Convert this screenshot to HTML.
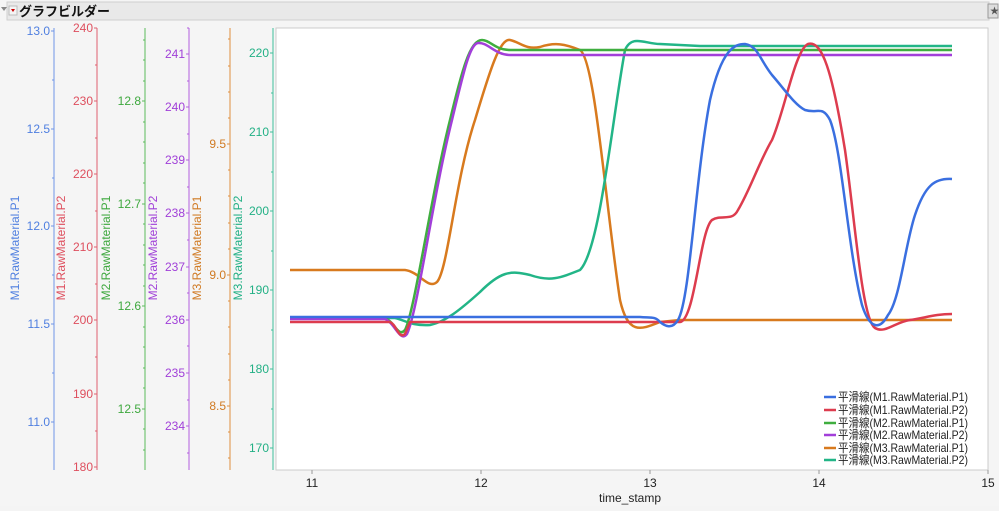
<!DOCTYPE html>
<html><head><meta charset="utf-8"><style>
body{margin:0;width:999px;height:506px;background:#f4f4f4;overflow:hidden;font-family:"Liberation Sans","Noto Sans CJK JP",sans-serif;}
</style></head><body>
<svg width="999" height="506" xmlns="http://www.w3.org/2000/svg" font-family="Liberation Sans, Noto Sans CJK JP, sans-serif">
<rect x="0" y="0" width="999" height="506" fill="#f5f5f5"/>
<rect x="7" y="2" width="982" height="18" fill="#e9e9e9" stroke="#cfcfcf"/>
<path d="M1 7 L7 7 L4 11 Z" fill="#888"/>
<rect x="9" y="6" width="8" height="9" fill="#f4f4f4" stroke="#bbb"/>
<path d="M11 9 L15 9 L13 12 Z" fill="#c00"/>
<text x="19" y="16" font-size="13" font-weight="bold" fill="#111">グラフビルダー</text>
<rect x="988" y="4" width="10" height="14" fill="#ddd" stroke="#999"/>
<text x="990" y="14" font-size="9" fill="#555">★</text>
<rect x="276" y="28" width="712" height="442" fill="#fff" stroke="#ccc"/>
<g font-size="12">
<line x1="54" y1="28" x2="54" y2="470" stroke="#6f95e8"/>
<path stroke="#6f95e8" d="M51 31h3M51 129h3M51 226h3M51 324h3M51 422h3M52 80h2M52 178h2M52 275h2M52 373h2"/>
<g fill="#4f7fe0" text-anchor="end"><text x="50" y="35">13.0</text><text x="50" y="133">12.5</text><text x="50" y="230">12.0</text><text x="50" y="328">11.5</text><text x="50" y="426">11.0</text></g>
<text transform="translate(19,248) rotate(-90)" text-anchor="middle" fill="#4f7fe0">M1.RawMaterial.P1</text>
<line x1="97" y1="28" x2="97" y2="470" stroke="#e0606e"/>
<path stroke="#e0606e" d="M94 28h3M94 101h3M94 174h3M94 247h3M94 320h3M94 394h3M94 467h3M95 65h2M95 138h2M95 211h2M95 284h2M95 357h2M95 431h2"/>
<g fill="#de4f5e" text-anchor="end"><text x="93" y="32">240</text><text x="93" y="105">230</text><text x="93" y="178">220</text><text x="93" y="251">210</text><text x="93" y="324">200</text><text x="93" y="398">190</text><text x="93" y="471">180</text></g>
<text transform="translate(65,248) rotate(-90)" text-anchor="middle" fill="#de4f5e">M1.RawMaterial.P2</text>
<line x1="145" y1="28" x2="145" y2="470" stroke="#5cba5c"/>
<path stroke="#5cba5c" d="M142 101h3M142 204h3M142 306h3M142 409h3M143 40h2M143 60h2M143 81h2M143 122h2M143 142h2M143 163h2M143 183h2M143 224h2M143 245h2M143 265h2M143 286h2M143 327h2M143 347h2M143 368h2M143 388h2M143 429h2M143 450h2"/>
<g fill="#3ea83e" text-anchor="end"><text x="141" y="105">12.8</text><text x="141" y="208">12.7</text><text x="141" y="310">12.6</text><text x="141" y="413">12.5</text></g>
<text transform="translate(110,248) rotate(-90)" text-anchor="middle" fill="#3ea83e">M2.RawMaterial.P1</text>
<line x1="189" y1="28" x2="189" y2="470" stroke="#b45ee0"/>
<path stroke="#b45ee0" d="M186 54h3M186 107h3M186 160h3M186 213h3M186 267h3M186 320h3M186 373h3M186 426h3M187 28h2M187 81h2M187 134h2M187 187h2M187 240h2M187 293h2M187 346h2M187 400h2M187 453h2"/>
<g fill="#a03fd8" text-anchor="end"><text x="185" y="58">241</text><text x="185" y="111">240</text><text x="185" y="164">239</text><text x="185" y="217">238</text><text x="185" y="271">237</text><text x="185" y="324">236</text><text x="185" y="377">235</text><text x="185" y="430">234</text></g>
<text transform="translate(157,248) rotate(-90)" text-anchor="middle" fill="#a03fd8">M2.RawMaterial.P2</text>
<line x1="230" y1="28" x2="230" y2="470" stroke="#e09040"/>
<path stroke="#e09040" d="M227 144h3M227 275h3M227 406h3M228 39h2M228 66h2M228 92h2M228 118h2M228 170h2M228 196h2M228 223h2M228 249h2M228 301h2M228 327h2M228 354h2M228 380h2M228 432h2M228 458h2"/>
<g fill="#d07a22" text-anchor="end"><text x="226" y="148">9.5</text><text x="226" y="279">9.0</text><text x="226" y="410">8.5</text></g>
<text transform="translate(201,248) rotate(-90)" text-anchor="middle" fill="#d07a22">M3.RawMaterial.P1</text>
<line x1="273" y1="28" x2="273" y2="470" stroke="#40c09a"/>
<path stroke="#40c09a" d="M270 53h3M270 132h3M270 211h3M270 290h3M270 369h3M270 448h3M271 93h2M271 172h2M271 251h2M271 330h2M271 409h2"/>
<g fill="#22b085" text-anchor="end"><text x="269" y="57">220</text><text x="269" y="136">210</text><text x="269" y="215">200</text><text x="269" y="294">190</text><text x="269" y="373">180</text><text x="269" y="452">170</text></g>
<text transform="translate(242,248) rotate(-90)" text-anchor="middle" fill="#22b085">M3.RawMaterial.P2</text>
<path stroke="#999" d="M312 470v4M481 470v4M650 470v4M819 470v4M988 470v4"/>
<g fill="#222" text-anchor="middle"><text x="312" y="487">11</text><text x="481" y="487">12</text><text x="650" y="487">13</text><text x="819" y="487">14</text><text x="988" y="487">15</text><text x="630" y="502">time_stamp</text></g>
</g>
<g fill="none" stroke-width="2.5" stroke-linejoin="round">
<path stroke="#d87a1e" d="M290 270 L405 270 C420 272 428 290 437 282 C448 270 455 180 475 120 C490 70 500 38 510 40 C520 42 525 50 540 47 C555 42 565 44 580 50 C595 60 605 200 620 300 C628 335 640 330 660 322 L680 320 L952 320"/>
<path stroke="#22b587" d="M290 318 L395 318 C405 320 410 326 430 325 C445 322 460 310 480 292 C500 272 510 270 530 275 C550 282 560 278 580 270 C600 250 612 120 625 50 C632 34 645 44 660 44 L700 46 L952 46"/>
<path stroke="#3fae3f" d="M290 318 L385 318 C395 322 398 338 405 330 C415 310 430 200 450 120 C462 70 470 40 482 40 C490 40 495 50 510 50 L952 50"/>
<path stroke="#a23fd9" d="M290 319 L385 319 C395 323 400 343 407 334 C418 310 432 200 452 120 C464 70 470 44 478 43 C488 42 495 55 510 55 L952 55"/>
<path stroke="#dd3c4e" d="M290 322 L390 322 C396 324 399 340 405 334 L410 322 L680 322 C695 320 700 230 712 220 C722 214 732 222 738 210 C750 190 760 160 772 140 C785 110 795 50 808 44 C822 40 832 70 845 150 C855 220 862 320 875 328 C885 334 895 322 910 320 C925 318 935 314 952 314"/>
<path stroke="#3a6fe0" d="M290 317 L640 317 C650 318 655 316 660 322 C665 326 672 330 678 320 C690 300 695 180 710 100 C722 48 735 44 745 44 C758 46 760 60 772 75 C785 90 795 105 805 110 C818 114 822 105 830 120 C842 150 848 250 862 305 C870 330 880 330 888 315 C900 300 905 245 915 215 C925 185 935 178 952 179"/>
</g>
<g font-size="12" fill="#222" stroke-width="2.5">
<line x1="824" y1="397" x2="836" y2="397" stroke="#3a6fe0"/><text x="838" y="401" textLength="130" lengthAdjust="spacingAndGlyphs">平滑線(M1.RawMaterial.P1)</text>
<line x1="824" y1="410" x2="836" y2="410" stroke="#dd3c4e"/><text x="838" y="414" textLength="130" lengthAdjust="spacingAndGlyphs">平滑線(M1.RawMaterial.P2)</text>
<line x1="824" y1="423" x2="836" y2="423" stroke="#3fae3f"/><text x="838" y="427" textLength="130" lengthAdjust="spacingAndGlyphs">平滑線(M2.RawMaterial.P1)</text>
<line x1="824" y1="435" x2="836" y2="435" stroke="#a23fd9"/><text x="838" y="439" textLength="130" lengthAdjust="spacingAndGlyphs">平滑線(M2.RawMaterial.P2)</text>
<line x1="824" y1="448" x2="836" y2="448" stroke="#d87a1e"/><text x="838" y="452" textLength="130" lengthAdjust="spacingAndGlyphs">平滑線(M3.RawMaterial.P1)</text>
<line x1="824" y1="460" x2="836" y2="460" stroke="#22b587"/><text x="838" y="464" textLength="130" lengthAdjust="spacingAndGlyphs">平滑線(M3.RawMaterial.P2)</text>
</g>
</svg>
</body></html>
